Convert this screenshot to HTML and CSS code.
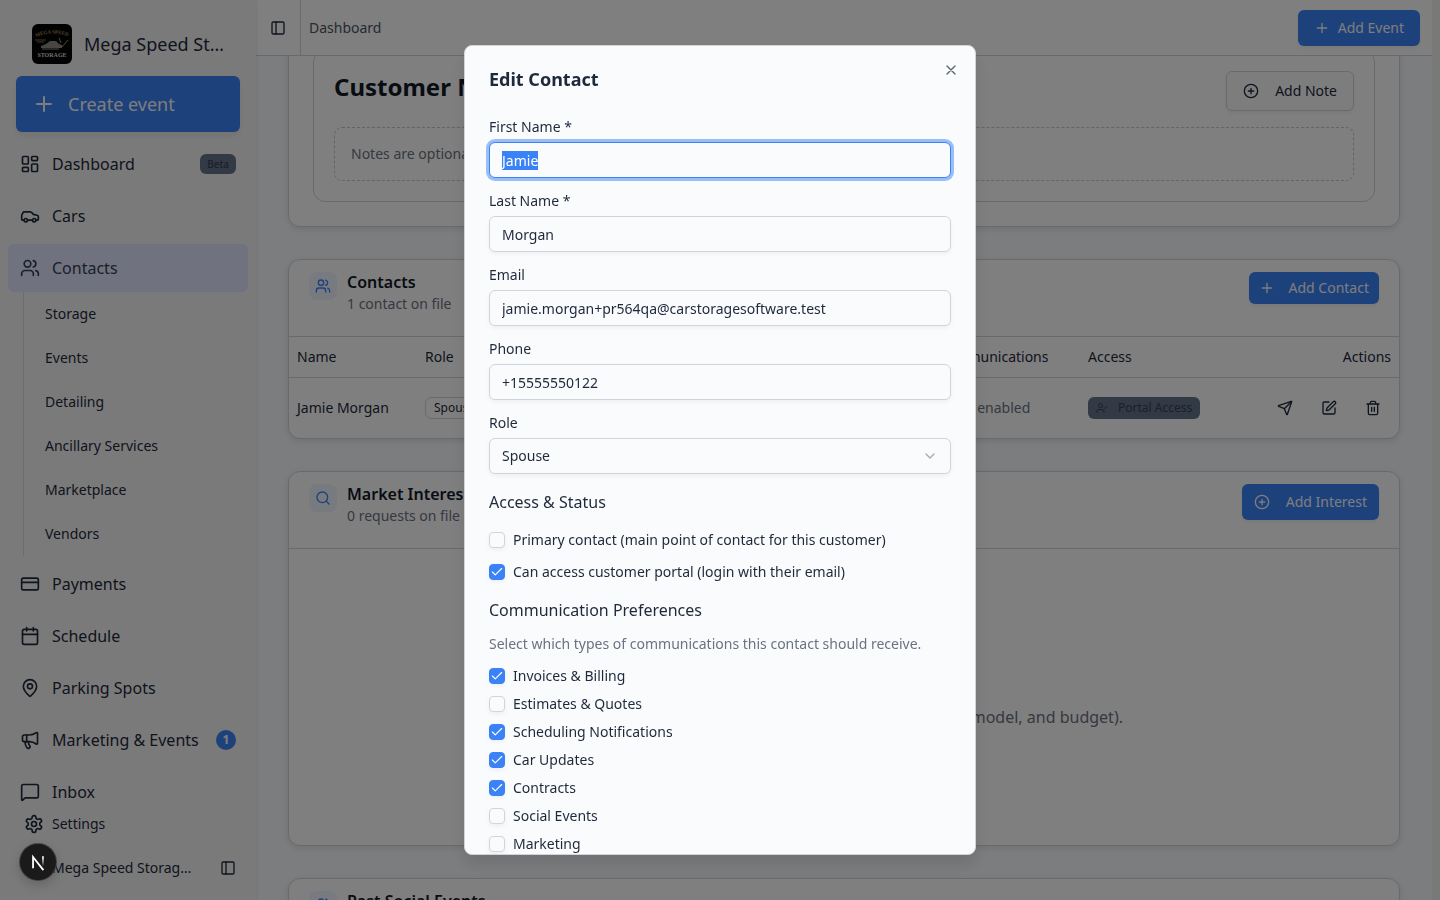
FILE: index.html
```html
<!DOCTYPE html>
<html lang="en">
<head>
    <meta charset="UTF-8">
    <meta name="viewport" content="width=device-width, initial-scale=1.0">
    <title>Mega Speed Storage - Contacts</title>
    <link rel="stylesheet" href="styles.css">
</head>
<body>
    <!-- icons shared by several places -->
    <svg class="sprite" aria-hidden="true">
        <symbol id="i-plus" viewBox="0 0 24 24"><path d="M5 12h14M12 5v14"/></symbol>
        <symbol id="i-circle-plus" viewBox="0 0 24 24"><circle cx="12" cy="12" r="10"/><path d="M8 12h8M12 8v8"/></symbol>
        <symbol id="i-users" viewBox="0 0 24 24"><path d="M16 21v-2a4 4 0 0 0-4-4H6a4 4 0 0 0-4 4v2"/><circle cx="9" cy="7" r="4"/><path d="M22 21v-2a4 4 0 0 0-3-3.870M16 3.130a4 4 0 0 1 0 7.750"/></symbol>
        <symbol id="i-panel" viewBox="0 0 24 24"><rect width="18" height="18" x="3" y="3" rx="2"/><path d="M9 3v18"/></symbol>
    </svg>

    <div class="app">
        <aside class="sidebar">
            <div class="brand">
                <svg class="brand-logo" viewBox="0 0 40 40" aria-hidden="true">
                    <rect width="40" height="40" rx="6" fill="#050505"/>
                    <path id="arc" d="M4 13Q20 6 38 13" fill="none"/>
                    <text class="logo-top"><textPath href="#arc">MEGA SPEED</textPath></text>
                    <path d="M3 16h11M5 18h7" stroke="#8a6f45" stroke-width="1"/>
                    <path d="M9 22l5-2 4-3h6l3 3 3 1v3H9z" fill="#8f8d80"/>
                    <path d="M30 23l6-7M27 14l2 5M10 25h17" stroke="#9b9473" stroke-width="1"/>
                    <text x="20" y="33" class="logo-bottom">STORAGE</text>
                </svg>
                <span class="brand-name">Mega Speed Storage</span>
            </div>
            <button class="create-button"><svg class="icon icon-xl"><use href="#i-plus"/></svg>Create event</button>

            <nav class="nav">
                <a href="#" class="nav-item">
                    <svg class="icon icon-lg" viewBox="0 0 24 24"><rect width="7" height="9" x="3" y="3" rx="1"/><rect width="7" height="5" x="14" y="3" rx="1"/><rect width="7" height="9" x="14" y="12" rx="1"/><rect width="7" height="5" x="3" y="16" rx="1"/></svg>
                    <span>Dashboard</span><span class="badge beta">Beta</span>
                </a>
                <a href="#" class="nav-item">
                    <svg class="icon icon-lg" viewBox="0 0 24 24"><path d="M19 17h2c.6 0 1-.4 1-1v-3c0-.9-.7-1.7-1.5-1.9L16 10s-1.300-1.400-2.200-2.300c-.5-.4-1.100-.7-1.800-.7H5c-.6 0-1.100.4-1.400.9l-1.400 2.900A3.700 3.700 0 0 0 2 12v4c0 .6.4 1 1 1h2"/><circle cx="7" cy="17" r="2"/><path d="M9 17h6"/><circle cx="17" cy="17" r="2"/></svg>
                    <span>Cars</span>
                </a>
                <div>
                    <a href="#" class="nav-item active"><svg class="icon icon-lg"><use href="#i-users"/></svg><span>Contacts</span></a>
                    <div class="subnav">
                        <a href="#">Storage</a>
                        <a href="#">Events</a>
                        <a href="#">Detailing</a>
                        <a href="#">Ancillary Services</a>
                        <a href="#">Marketplace</a>
                        <a href="#">Vendors</a>
                    </div>
                </div>
                <a href="#" class="nav-item">
                    <svg class="icon icon-lg" viewBox="0 0 24 24"><rect width="20" height="14" x="2" y="5" rx="2"/><path d="M2 10h20"/></svg>
                    <span>Payments</span>
                </a>
                <a href="#" class="nav-item">
                    <svg class="icon icon-lg" viewBox="0 0 24 24"><path d="M8 2v4M16 2v4"/><rect width="18" height="18" x="3" y="4" rx="2"/><path d="M3 10h18"/></svg>
                    <span>Schedule</span>
                </a>
                <a href="#" class="nav-item">
                    <svg class="icon icon-lg" viewBox="0 0 24 24"><path d="M20 10c0 4.993-5.539 10.193-7.399 11.799a1 1 0 0 1-1.202 0C9.539 20.193 4 14.993 4 10a8 8 0 0 1 16 0"/><circle cx="12" cy="10" r="3"/></svg>
                    <span>Parking Spots</span>
                </a>
                <a href="#" class="nav-item">
                    <svg class="icon icon-lg" viewBox="0 0 24 24"><path d="M11 6a13 13 0 0 0 8.400-2.800A1 1 0 0 1 21 4v12a1 1 0 0 1-1.600.8A13 13 0 0 0 11 14H5a2 2 0 0 1-2-2V8a2 2 0 0 1 2-2z"/><path d="M6 14a12 12 0 0 0 2.400 7.200 2 2 0 0 0 3.200-2.400A8 8 0 0 1 10 14"/><path d="M8 6v8"/></svg>
                    <span>Marketing &amp; Events</span><span class="count">1</span>
                </a>
                <a href="#" class="nav-item">
                    <svg class="icon icon-lg" viewBox="0 0 24 24"><path d="M22 17a2 2 0 0 1-2 2H6.828a2 2 0 0 0-1.414.586l-2.202 2.202A.7.7 0 0 1 2 21.300V5a2 2 0 0 1 2-2h16a2 2 0 0 1 2 2z"/></svg>
                    <span>Inbox</span>
                </a>
            </nav>

            <div class="sidebar-footer">
                <a href="#" class="settings">
                    <svg class="icon icon-lg" viewBox="0 0 24 24"><path d="M12.220 2h-.44a2 2 0 0 0-2 2v.18a2 2 0 0 1-1 1.730l-.43.25a2 2 0 0 1-2 0l-.15-.08a2 2 0 0 0-2.730.73l-.22.38a2 2 0 0 0 .73 2.730l.15.1a2 2 0 0 1 1 1.720v.51a2 2 0 0 1-1 1.740l-.15.09a2 2 0 0 0-.73 2.730l.22.38a2 2 0 0 0 2.730.73l.15-.08a2 2 0 0 1 2 0l.43.25a2 2 0 0 1 1 1.730V20a2 2 0 0 0 2 2h.44a2 2 0 0 0 2-2v-.18a2 2 0 0 1 1-1.730l.43-.25a2 2 0 0 1 2 0l.15.08a2 2 0 0 0 2.730-.73l.22-.39a2 2 0 0 0-.73-2.730l-.15-.08a2 2 0 0 1-1-1.740v-.5a2 2 0 0 1 1-1.740l.15-.09a2 2 0 0 0 .73-2.730l-.22-.38a2 2 0 0 0-2.730-.73l-.15.08a2 2 0 0 1-2 0l-.43-.25a2 2 0 0 1-1-1.730V4a2 2 0 0 0-2-2z"/><circle cx="12" cy="12" r="3"/></svg>
                    Settings
                </a>
                <div class="account">
                    <span class="account-name">Mega Speed Storage LLC</span>
                    <button class="ghost-button" aria-label="Toggle sidebar"><svg class="icon"><use href="#i-panel"/></svg></button>
                </div>
            </div>
        </aside>

        <main class="main">
            <header class="topbar">
                <button class="toggle" aria-label="Toggle sidebar"><svg class="icon"><use href="#i-panel"/></svg></button>
                <span class="crumb">Dashboard</span>
                <button class="primary-button add-event"><svg class="icon"><use href="#i-plus"/></svg>Add Event</button>
            </header>

            <div class="content">
                <section class="card notes-card">
                    <div class="notes">
                        <div class="notes-head">
                            <h2>Customer Notes</h2>
                            <button class="outline-button"><svg class="icon"><use href="#i-circle-plus"/></svg>Add Note</button>
                        </div>
                        <p class="notes-empty">Notes are optional. Add one any time.</p>
                    </div>
                </section>

                <section class="card">
                    <div class="card-head">
                        <span class="tile"><svg class="icon"><use href="#i-users"/></svg></span>
                        <div class="card-title">
                            <h3>Contacts</h3>
                            <p>1 contact on file</p>
                        </div>
                        <button class="primary-button small"><svg class="icon"><use href="#i-plus"/></svg>Add Contact</button>
                    </div>
                    <table>
                        <thead>
                            <tr>
                                <th class="col-name">Name</th>
                                <th class="col-role">Role</th>
                                <th>Email</th>
                                <th class="col-phone">Phone</th>
                                <th class="col-comm">Communications</th>
                                <th class="col-access">Access</th>
                                <th class="col-actions">Actions</th>
                            </tr>
                        </thead>
                        <tbody>
                            <tr>
                                <td>Jamie Morgan</td>
                                <td><span class="badge outline">Spouse</span></td>
                                <td>jamie.morgan</td>
                                <td>+15555550122</td>
                                <td class="muted">4 of 7 enabled</td>
                                <td>
                                    <span class="badge portal">
                                        <svg class="icon icon-sm" viewBox="0 0 24 24"><path d="M16 21v-2a4 4 0 0 0-4-4H6a4 4 0 0 0-4 4v2"/><circle cx="9" cy="7" r="4"/><path d="m16 11 2 2 4-4"/></svg>
                                        Portal Access
                                    </span>
                                </td>
                                <td>
                                    <div class="actions">
                                        <button class="ghost-button" aria-label="Send invite"><svg class="icon" viewBox="0 0 24 24"><path d="M14.536 21.686a.5.5 0 0 0 .937-.024l6.500-19a.496.496 0 0 0-.635-.635l-19 6.500a.5.5 0 0 0-.024.937l7.930 3.180a2 2 0 0 1 1.112 1.110z"/><path d="m21.854 2.147-10.940 10.939"/></svg></button>
                                        <button class="ghost-button" aria-label="Edit contact"><svg class="icon" viewBox="0 0 24 24"><path d="M12 3H5a2 2 0 0 0-2 2v14a2 2 0 0 0 2 2h14a2 2 0 0 0 2-2v-7"/><path d="M18.375 2.625a1 1 0 0 1 3 3l-9.013 9.014a2 2 0 0 1-.853.505l-2.873.84a.5.5 0 0 1-.62-.62l.84-2.873a2 2 0 0 1 .506-.852z"/></svg></button>
                                        <button class="ghost-button" aria-label="Delete contact"><svg class="icon" viewBox="0 0 24 24"><path d="M3 6h18M19 6v14c0 1-1 2-2 2H7c-1 0-2-1-2-2V6M8 6V4c0-1 1-2 2-2h4c1 0 2 1 2 2v2M10 11v6M14 11v6"/></svg></button>
                                    </div>
                                </td>
                            </tr>
                        </tbody>
                    </table>
                </section>

                <section class="card">
                    <div class="card-head">
                        <span class="tile"><svg class="icon" viewBox="0 0 24 24"><circle cx="11" cy="11" r="8"/><path d="m21 21-4.300-4.300"/></svg></span>
                        <div class="card-title">
                            <h3>Market Interests</h3>
                            <p>0 requests on file</p>
                        </div>
                        <button class="primary-button"><svg class="icon"><use href="#i-circle-plus"/></svg>Add Interest</button>
                    </div>
                    <p class="empty">Add an interest to track what they want to buy (make, model, and budget).</p>
                </section>

                <section class="card">
                    <div class="card-head">
                        <span class="tile"><svg class="icon"><use href="#i-users"/></svg></span>
                        <div class="card-title">
                            <h3>Past Social Events</h3>
                            <p>0 events attended</p>
                        </div>
                    </div>
                </section>
            </div>
        </main>
    </div>

    <div class="overlay">
        <div class="modal" role="dialog" aria-modal="true" aria-labelledby="modal-title">
            <button class="close" aria-label="Close"><svg class="icon" viewBox="0 0 24 24"><path d="M18 6 6 18M6 6l12 12"/></svg></button>
            <h2 id="modal-title">Edit Contact</h2>
            <form>
                <div class="field">
                    <label for="first-name">First Name *</label>
                    <input type="text" id="first-name" value="Jamie" required>
                </div>
                <div class="field">
                    <label for="last-name">Last Name *</label>
                    <input type="text" id="last-name" value="Morgan" required>
                </div>
                <div class="field">
                    <label for="email">Email</label>
                    <input type="email" id="email" value="jamie.morgan+pr564qa@carstoragesoftware.test">
                </div>
                <div class="field">
                    <label for="phone">Phone</label>
                    <input type="tel" id="phone" value="+15555550122">
                </div>
                <div class="field">
                    <label for="role">Role</label>
                    <select id="role">
                        <option>Spouse</option>
                    </select>
                </div>

                <h3>Access &amp; Status</h3>
                <div class="checks wide">
                    <label><input type="checkbox">Primary contact (main point of contact for this customer)</label>
                    <label><input type="checkbox" checked>Can access customer portal (login with their email)</label>
                </div>

                <div class="prefs">
                    <h3>Communication Preferences</h3>
                    <p>Select which types of communications this contact should receive.</p>
                    <div class="checks">
                        <label><input type="checkbox" checked>Invoices &amp; Billing</label>
                        <label><input type="checkbox">Estimates &amp; Quotes</label>
                        <label><input type="checkbox" checked>Scheduling Notifications</label>
                        <label><input type="checkbox" checked>Car Updates</label>
                        <label><input type="checkbox" checked>Contracts</label>
                        <label><input type="checkbox">Social Events</label>
                        <label><input type="checkbox">Marketing</label>
                    </div>
                </div>
            </form>
        </div>
    </div>

    <button class="dev-badge" aria-label="Open dev tools">
        <svg viewBox="0 0 40 40" fill="none">
            <defs>
                <linearGradient id="fade" x1="0" y1="14" x2="0" y2="25" gradientUnits="userSpaceOnUse"><stop stop-color="#fff"/><stop offset="1" stop-color="#fff" stop-opacity="0"/></linearGradient>
            </defs>
            <path d="M14.500 27V14.500L26 29" stroke="#fff" stroke-width="2"/>
            <path d="M25.500 13.500v12" stroke="url(#fade)" stroke-width="2"/>
        </svg>
    </button>

    <script>
        const firstName = document.getElementById("first-name");
        firstName.focus();
        firstName.select();
    </script>
</body>
</html>
```
FILE: styles.css
```css
* {
    box-sizing: border-box;
}
body {
    margin: 0;
    height: 100vh;
    overflow: hidden;
    font-family: "Noto Sans", sans-serif;
    font-size: 14px;
    line-height: 20px;
    color: #1e293b;
    background: #f8fafc;
}
h2, h3, p {
    margin: 0;
}
a {
    color: inherit;
    text-decoration: none;
}
button, input, select {
    font: inherit;
    color: inherit;
}
button {
    display: flex;
    align-items: center;
    justify-content: center;
    flex-shrink: 0;
    padding: 0;
    border: none;
    background: none;
    cursor: pointer;
}
.sprite {
    display: none;
}
.icon {
    width: 16px;
    height: 16px;
    flex-shrink: 0;
    fill: none;
    stroke: currentColor;
    stroke-width: 2;
    stroke-linecap: round;
    stroke-linejoin: round;
}
.icon-sm {
    width: 12px;
    height: 12px;
}
.icon-lg {
    width: 20px;
    height: 20px;
}
.icon-xl {
    width: 24px;
    height: 24px;
}
.app {
    display: flex;
    height: 100vh;
    padding-right: 8px;
    background: #f3f2f1;
}

/* sidebar */
.sidebar {
    display: flex;
    flex-direction: column;
    width: 256px;
    flex-shrink: 0;
    background: #f5f5f5;
    box-shadow: 0 0 4px rgba(0, 0, 0, 0.12);
    z-index: 1;
}
.brand {
    display: flex;
    align-items: center;
    gap: 12px;
    padding: 24px 32px 12px;
}
.brand-logo {
    width: 40px;
    height: 40px;
    flex-shrink: 0;
}
.logo-top {
    font: bold 5px "Liberation Serif", serif;
    fill: #a3844f;
}
.logo-bottom {
    font: bold 6px "Liberation Serif", serif;
    fill: #d8d8d8;
    text-anchor: middle;
}
.brand-name {
    font-size: 18px;
    line-height: 28px;
    overflow: hidden;
    white-space: nowrap;
    text-overflow: ellipsis;
}
.create-button {
    justify-content: flex-start;
    gap: 12px;
    height: 56px;
    margin: 0 16px;
    padding: 0 16px;
    border-radius: 6px;
    background: #3b82f6;
    color: #fafbfd;
    font-size: 18px;
    box-shadow: 0 4px 6px rgba(0, 0, 0, 0.06);
}
.nav {
    display: flex;
    flex-direction: column;
    flex: 1;
    gap: 4px;
    min-height: 0;
    padding: 8px 8px 0;
    overflow: hidden;
}
.nav-item {
    display: flex;
    align-items: center;
    flex-shrink: 0;
    gap: 12px;
    height: 48px;
    padding: 0 12px;
    border-radius: 6px;
    font-size: 16px;
    white-space: nowrap;
}
.nav-item.active {
    background: #e0e4ff;
    color: #374151;
}
.subnav {
    margin-left: 15px;
    border-left: 1px solid #d9dbde;
}
.subnav a {
    display: flex;
    align-items: center;
    height: 44px;
    padding-left: 21px;
}
.badge {
    display: inline-flex;
    align-items: center;
    height: 22px;
    padding: 0 8px;
    border-radius: 6px;
    font-size: 12px;
    line-height: 16px;
}
.beta {
    height: 20px;
    margin-left: auto;
    padding: 0 7px;
    background: #64748b;
    color: #374151;
    font-size: 10px;
    font-weight: 500;
}
.count {
    display: grid;
    place-items: center;
    width: 20px;
    height: 20px;
    margin-left: auto;
    border-radius: 50%;
    background: #3b82f6;
    color: #fff;
    font-size: 12px;
    font-weight: 700;
}
.sidebar-footer {
    padding: 0 8px 8px;
    background: #f5f5f5;
}
.settings {
    display: flex;
    align-items: center;
    gap: 8px;
    height: 32px;
    padding: 0 16px;
}
.account {
    display: flex;
    align-items: center;
    justify-content: space-between;
    height: 48px;
    margin-top: 4px;
    padding: 0 2px 0 44px;
}
.account-name {
    width: 140px;
    overflow: hidden;
    white-space: nowrap;
    text-overflow: ellipsis;
}
.ghost-button {
    width: 36px;
    height: 36px;
}

/* main area */
.main {
    display: flex;
    flex-direction: column;
    flex: 1;
    min-width: 0;
    background: #f8fafc;
}
.topbar {
    display: flex;
    align-items: center;
    flex-shrink: 0;
    height: 56px;
    padding-right: 12px;
    border-bottom: 1px solid #d1d5db;
    background: #fff;
    color: #4b5563;
}
.toggle {
    align-self: stretch;
    width: 45px;
    border-right: 1px solid #d1d5db;
    color: #1e293b;
}
.crumb {
    padding-left: 8px;
}
.primary-button {
    gap: 16px;
    height: 36px;
    padding: 0 12px;
    border-radius: 6px;
    background: #3b82f6;
    color: #fafbfd;
    box-shadow: 0 2px 4px rgba(0, 0, 0, 0.06);
}
.primary-button.small {
    gap: 14px;
    height: 32px;
    padding: 0 10px;
}
.primary-button.add-event {
    gap: 8px;
    margin-left: auto;
    padding: 0 16px;
}
.outline-button {
    gap: 16px;
    height: 40px;
    padding: 0 16px;
    border: 1px solid #d1d5db;
    border-radius: 6px;
    background: #fafbfd;
    box-shadow: 0 2px 4px rgba(0, 0, 0, 0.06);
}
.content {
    display: flex;
    flex-direction: column;
    flex: 1;
    gap: 32px;
    min-height: 0;
    padding: 0 32px;
    overflow: hidden;
}
.card {
    flex-shrink: 0;
    border: 1px solid #d1d5db;
    border-radius: 12px;
    background: #fff;
    box-shadow: 0 2px 6px rgba(0, 0, 0, 0.1);
}
.notes-card {
    /* scrolled partly under the top bar */
    margin-top: -31px;
    padding: 24px;
}
.notes {
    padding: 20px;
    border: 1px solid #d1d5db;
    border-radius: 12px;
}
.notes-head {
    display: flex;
    align-items: flex-start;
    justify-content: space-between;
    margin-bottom: 16px;
}
.notes-head h2 {
    font-size: 24px;
    line-height: 32px;
    color: #111827;
}
.notes-empty {
    padding: 16px;
    border: 1px dashed #c5c9cf;
    border-radius: 8px;
    color: #6b7280;
}
.card-head {
    display: flex;
    align-items: flex-start;
    gap: 10px;
    min-height: 76px;
    padding: 12px 20px;
}
.card-head .primary-button {
    margin-left: auto;
}
.tile {
    display: grid;
    place-items: center;
    width: 28px;
    height: 28px;
    border-radius: 8px;
    background: #eff4ff;
    color: #3b82f6;
}
.card-title h3 {
    font-size: 16px;
    line-height: 20px;
    font-weight: 600;
    color: #111827;
}
.card-title p {
    margin-top: 2px;
    color: #6b7280;
}
table {
    width: 100%;
    table-layout: fixed;
    border-collapse: collapse;
}
th, td {
    padding: 0 8px;
    text-align: left;
    font-weight: 400;
    white-space: nowrap;
}
th {
    height: 41px;
    border-top: 1px solid #d1d5db;
    border-bottom: 1px solid #d1d5db;
}
td {
    height: 60px;
}
.col-name {
    width: 128px;
}
.col-role {
    width: 96px;
}
.col-phone {
    width: 140px;
}
.col-comm {
    width: 151px;
}
.col-access {
    width: 160px;
}
.col-actions {
    width: 159px;
    text-align: right;
}
.muted {
    color: #6b7280;
}
.outline {
    border: 1px solid #d1d5db;
}
.portal {
    gap: 10px;
    background: #64748b;
    color: #374151;
}
.actions {
    display: flex;
    justify-content: flex-end;
    gap: 8px;
}
.empty {
    padding: 156px 24px 116px;
    border-top: 1px solid #d1d5db;
    text-align: center;
    font-size: 16px;
    line-height: 24px;
    color: #6b7280;
}

/* edit contact dialog */
.overlay {
    position: fixed;
    inset: 0;
    z-index: 10;
    display: flex;
    align-items: center;
    justify-content: center;
    background: rgba(0, 0, 0, 0.5);
}
.modal {
    position: relative;
    width: 100%;
    max-width: 512px;
    max-height: 90vh;
    padding: 24px;
    overflow: hidden;
    border: 1px solid #d1d5db;
    border-radius: 8px;
    background: #fafbfd;
    box-shadow: 0 10px 15px rgba(0, 0, 0, 0.1);
}
.close {
    position: absolute;
    top: 16px;
    right: 16px;
    color: #5b6472;
}
.modal h2 {
    margin-bottom: 32px;
    font-size: 18px;
    line-height: 18px;
    font-weight: 700;
}
.modal h3 {
    font-size: 16px;
    line-height: 24px;
    font-weight: 400;
}
.field {
    display: flex;
    flex-direction: column;
    gap: 8px;
    margin-bottom: 16px;
}
.field label {
    line-height: 14px;
}
.field input, .field select {
    width: 100%;
    height: 36px;
    padding: 0 12px;
    border: 1px solid #d1d5db;
    border-radius: 6px;
    outline: none;
    background: #fafbfd;
    box-shadow: 0 2px 4px rgba(0, 0, 0, 0.05);
}
.field select {
    appearance: none;
    background: #fafbfd url("data:image/svg+xml,%3Csvg xmlns='http://www.w3.org/2000/svg' viewBox='0 0 24 24' fill='none' stroke='%23a5abb4' stroke-width='2' stroke-linecap='round' stroke-linejoin='round'%3E%3Cpath d='m6 9 6 6 6-6'/%3E%3C/svg%3E") no-repeat right 12px center / 16px;
}
.field input:focus {
    border-color: #3b82f6;
    box-shadow: 0 0 0 3px rgba(59, 130, 246, 0.5);
}
.field input::selection {
    background: #3b82f6;
    color: #fff;
}
.checks {
    display: flex;
    flex-direction: column;
    gap: 8px;
}
.checks.wide {
    gap: 12px;
    margin: 16px 0;
}
.checks label {
    display: flex;
    align-items: center;
    gap: 8px;
}
.checks input {
    appearance: none;
    width: 16px;
    height: 16px;
    margin: 0;
    border: 1px solid #d1d5db;
    border-radius: 4px;
    background: #fafbfd;
    box-shadow: 0 2px 4px rgba(0, 0, 0, 0.05);
}
.checks input:checked {
    border-color: #3b82f6;
    background: #3b82f6 url("data:image/svg+xml,%3Csvg xmlns='http://www.w3.org/2000/svg' viewBox='0 0 24 24' fill='none' stroke='white' stroke-width='2' stroke-linecap='round' stroke-linejoin='round'%3E%3Cpath d='M20 6 9 17l-5-5'/%3E%3C/svg%3E") no-repeat center / 14px;
}
.prefs p {
    margin: 12px 0;
    color: #6b7280;
}

.dev-badge {
    position: fixed;
    left: 20px;
    bottom: 20px;
    z-index: 20;
    width: 36px;
    height: 36px;
    border-radius: 50%;
    background: #1a1a1a;
    box-shadow: 0 0 0 1px #454545, 0 4px 12px rgba(0, 0, 0, 0.2);
}
.dev-badge svg {
    width: 36px;
    height: 36px;
}
```
